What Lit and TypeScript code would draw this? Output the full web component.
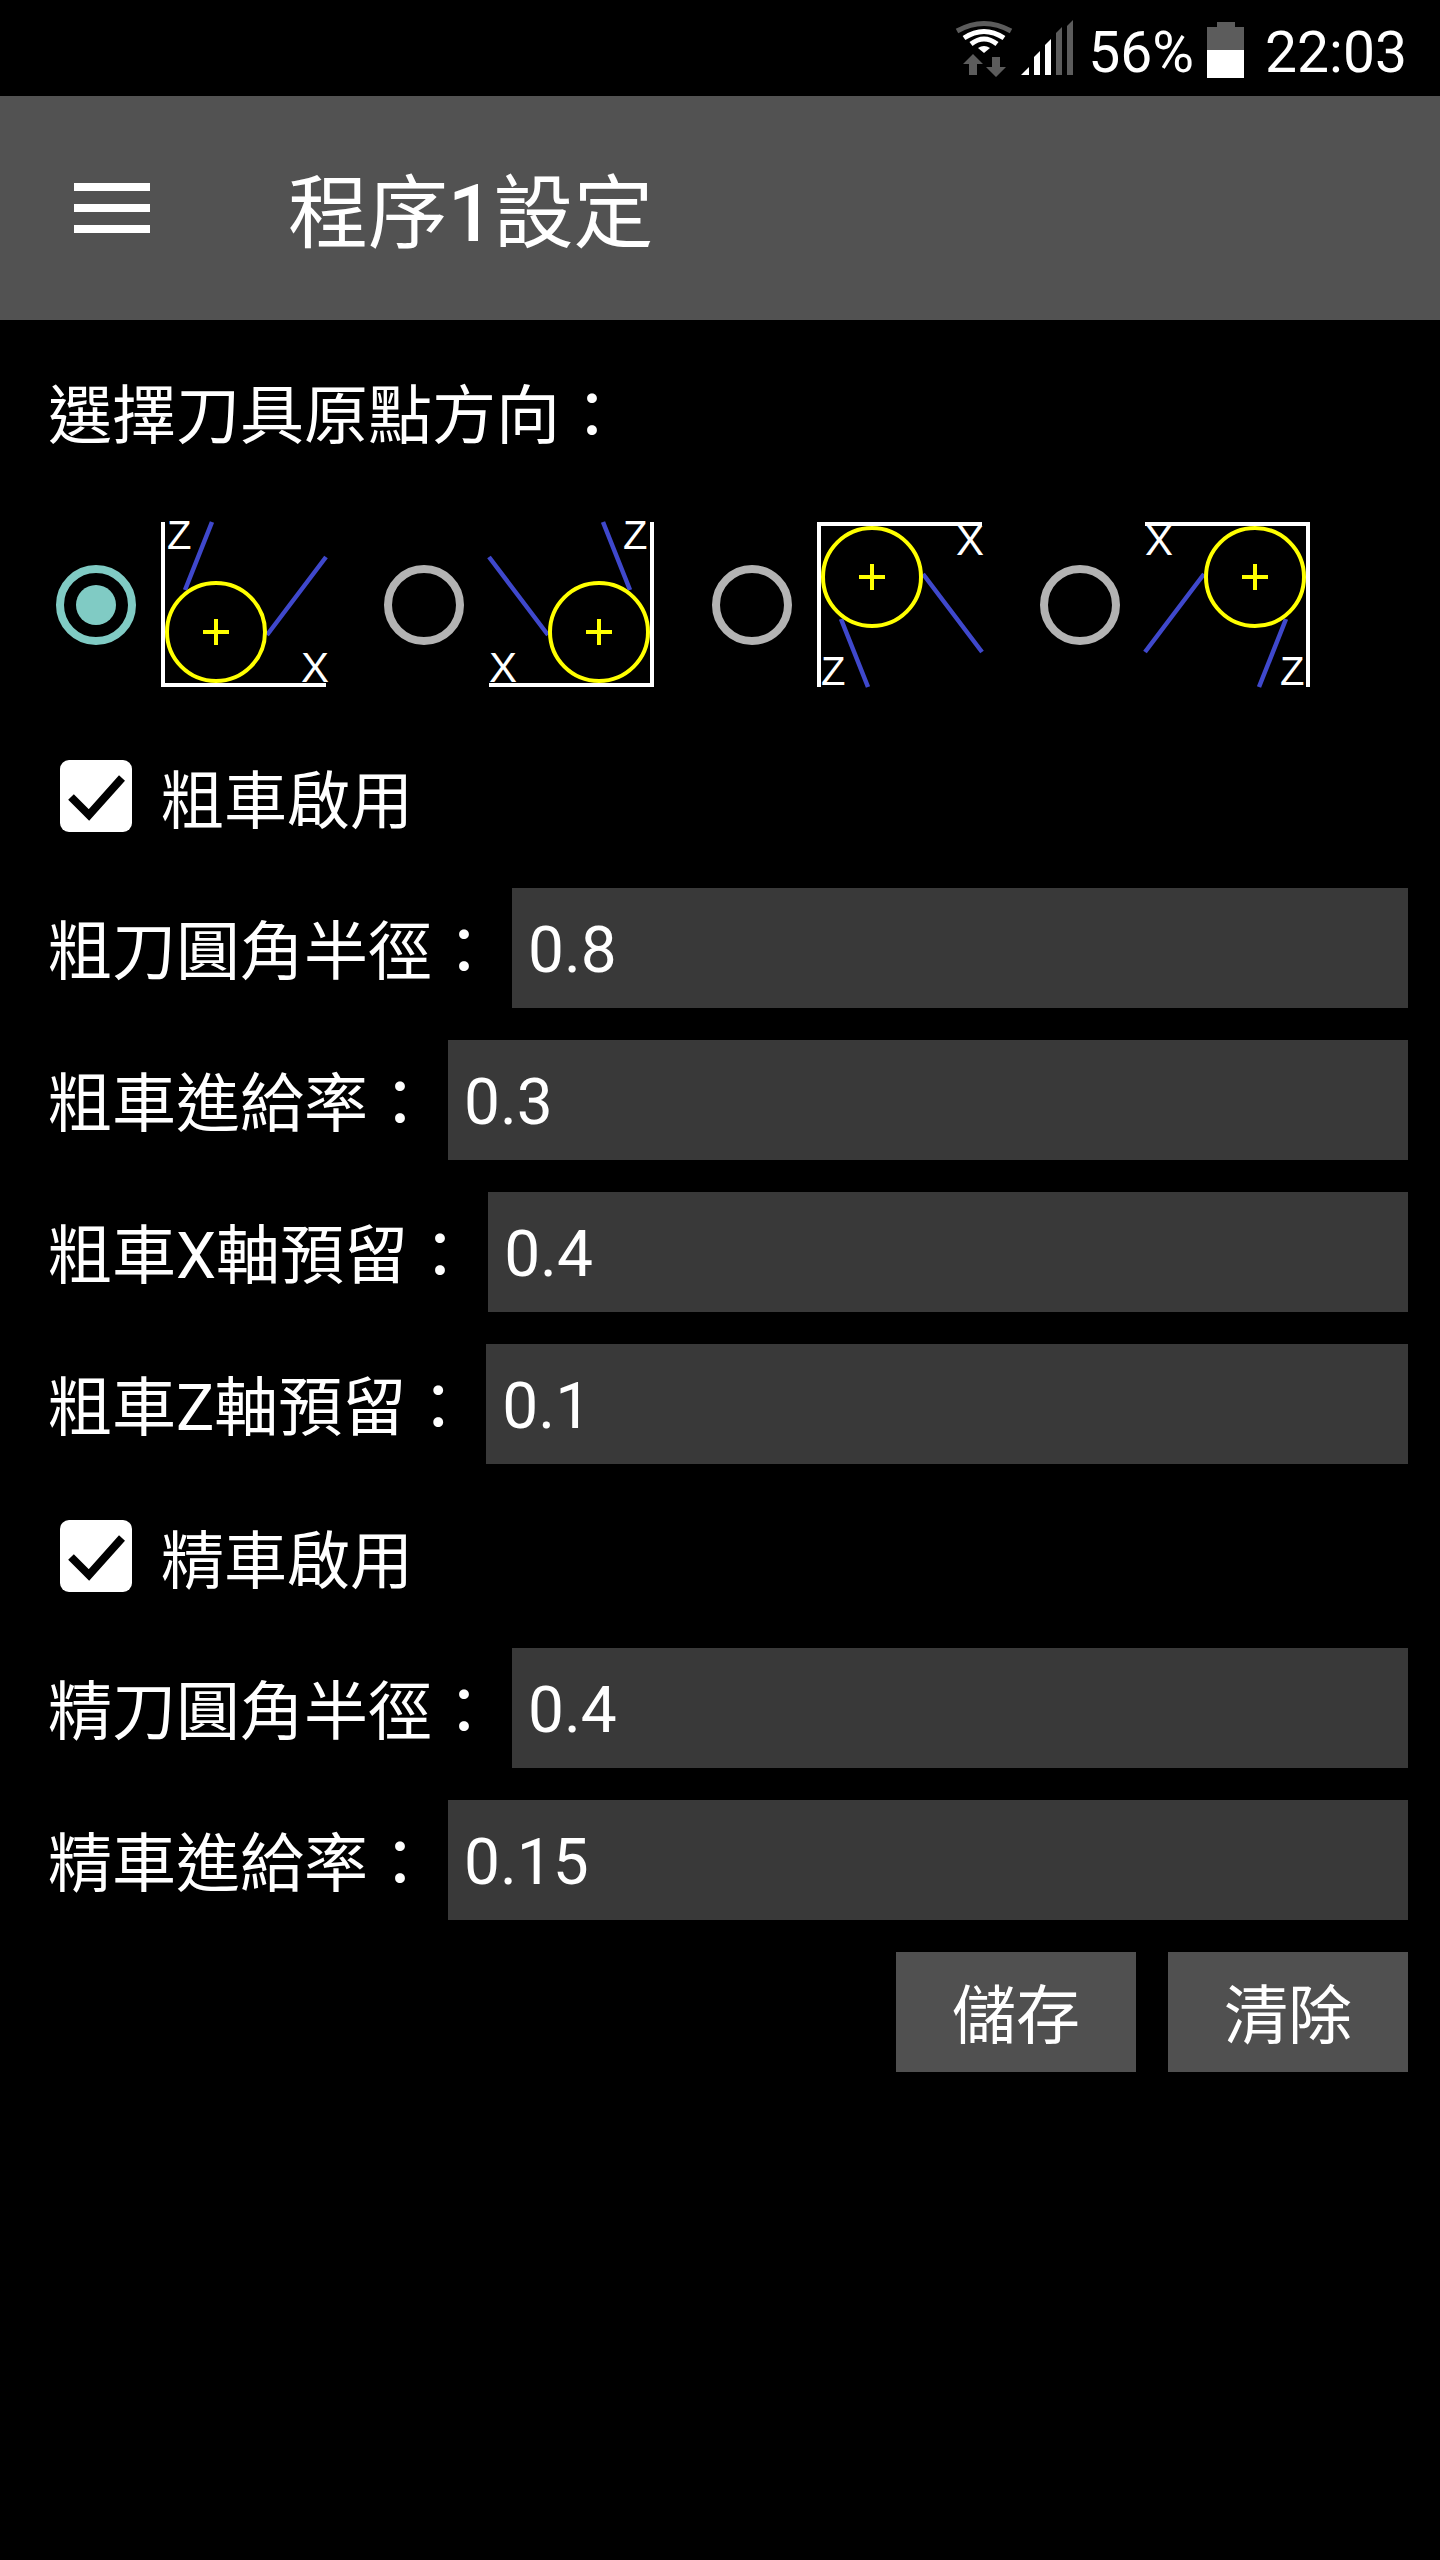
import { LitElement, css, html, svg } from 'lit';
import { customElement } from 'lit/decorators.js';

const origins = [
  { flipX: false, flipY: false, zX: 6, zY: 27, xX: 140, xY: 160, checked: true },
  { flipX: true, flipY: false, zX: 134, zY: 27, xX: 0, xY: 160, checked: false },
  { flipX: false, flipY: true, zX: 4, zY: 163, xX: 139, xY: 33, checked: false },
  { flipX: true, flipY: true, zX: 135, zY: 163, xX: 0, xY: 33, checked: false },
];

const roughFields = [
  { label: '粗刀圓角半徑：', value: '0.8' },
  { label: '粗車進給率：', value: '0.3' },
  { label: '粗車X軸預留：', value: '0.4' },
  { label: '粗車Z軸預留：', value: '0.1' },
];

const fineFields = [
  { label: '精刀圓角半徑：', value: '0.4' },
  { label: '精車進給率：', value: '0.15' },
];

@customElement('app-root')
export class AppRoot extends LitElement {
  static styles = css`
    :host {
      display: block;
      min-height: 2560px;
      background: #000;
      color: #fff;
      font-family: Roboto, 'Noto Sans CJK TC', sans-serif;
    }

    .status {
      display: flex;
      align-items: center;
      justify-content: flex-end;
      height: 96px;
      padding-right: 33px;
      font-size: 57px;
    }

    .status svg {
      display: block;
    }

    .status span {
      line-height: 96px;
      padding-top: 10px;
    }

    .wifi {
      margin-right: 7px;
    }

    .signal {
      margin-right: 15px;
    }

    .battery {
      margin: 4px 21px 0 13px;
    }

    .appbar {
      display: flex;
      align-items: center;
      height: 224px;
      padding-left: 74px;
      background: #525252;
    }

    .menu {
      display: block;
      margin-right: 138px;
    }

    .title {
      font-size: 80px;
      margin-top: -4px;
    }

    .title b {
      font-weight: 500;
    }

    main {
      padding: 46px 32px 0 48px;
      font-size: 64px;
    }

    .heading {
      line-height: 96px;
      padding-top: 3px;
      margin-bottom: -3px;
    }

    .origins {
      display: flex;
      margin: 60px 0 0 8px;
    }

    .origin {
      display: flex;
      align-items: center;
      gap: 25px;
      margin-right: 58px;
    }

    .origin svg {
      display: block;
      overflow: visible;
    }

    .radio {
      box-sizing: border-box;
      display: flex;
      align-items: center;
      justify-content: center;
      width: 80px;
      height: 80px;
      border: 8px solid #b3b3b3;
      border-radius: 50%;
    }

    .radio.on {
      border-color: #80cbc4;
    }

    .radio.on::after {
      content: '';
      width: 40px;
      height: 40px;
      border-radius: 50%;
      background: #80cbc4;
    }

    .check {
      display: flex;
      align-items: center;
      gap: 29px;
      height: 72px;
      margin: 56px 0 56px 12px;
      font-size: 63px;
    }

    .origins + .check {
      margin-top: 73px;
    }

    .check span {
      margin-top: -2px;
    }

    .box {
      display: block;
      flex: none;
    }

    .field {
      display: flex;
      align-items: center;
      height: 120px;
      margin-bottom: 32px;
    }

    .field label {
      flex: none;
      margin: -5px 16px 0 0;
    }

    input {
      flex: 1;
      box-sizing: border-box;
      min-width: 0;
      height: 120px;
      padding: 4px 16px 0;
      border: 0;
      border-radius: 0;
      background: #393939;
      color: #fff;
      font: inherit;
    }

    .buttons {
      display: flex;
      justify-content: flex-end;
      gap: 32px;
    }

    button {
      width: 240px;
      height: 120px;
      padding: 0 0 4px;
      border: 0;
      background: #505050;
      color: #fff;
      font: inherit;
    }
  `;

  private wifi() {
    return html`<svg class="wifi" width="60" height="58" viewBox="0 0 60 58">
      <path d="M3 12Q30 -3 57 12" fill="none" stroke="#5c5c5c" stroke-width="5" />
      <path d="M10 19Q30 6 50 19" fill="none" stroke="#fff" stroke-width="5" />
      <path d="M17 25Q30 15 43 25" fill="none" stroke="#fff" stroke-width="5" />
      <path d="M24 29Q30 25 36 29L30 34Z" fill="#fff" />
      <path d="M19 35L29 45H23V56H15V45H9Z" fill="#5c5c5c" />
      <path d="M42 58L32 48H38V38H46V48H52Z" fill="#5c5c5c" />
    </svg>`;
  }

  private signal() {
    return html`<svg class="signal" width="52" height="56" viewBox="0 0 52 56">
      <path d="M0 55L8 47V55Z" fill="#fff" />
      <path d="M13 37L19 31V55H13Z" fill="#fff" />
      <path d="M24 25L30 19V55H24Z" fill="#fff" />
      <path d="M35 13L41 7V55H35Z" fill="#5c5c5c" />
      <path d="M46 6L52 0V55H46Z" fill="#5c5c5c" />
    </svg>`;
  }

  private battery() {
    return html`<svg class="battery" width="37" height="56" viewBox="0 0 37 56">
      <path d="M10 0H28V5H37V28H0V5H10Z" fill="#5c5c5c" />
      <rect y="28" width="37" height="28" fill="#fff" />
    </svg>`;
  }

  // same drawing four times, only the text stays unmirrored
  private diagram(o: (typeof origins)[number]) {
    const sx = o.flipX ? -1 : 1;
    const sy = o.flipY ? -1 : 1;
    const flip = `translate(${o.flipX ? 165 : 0} ${o.flipY ? 165 : 0}) scale(${sx} ${sy})`;
    return html`<svg width="165" height="165" viewBox="0 0 165 165">
      ${svg`
        <g transform=${flip}>
          <path d="M2 0V163H165" fill="none" stroke="#fff" stroke-width="4" />
          <path d="M51 0L24 68M165 35L106 113" fill="none" stroke="#3f48cc" stroke-width="4.5" />
          <circle cx="55" cy="110" r="49" fill="none" stroke="#ff0" stroke-width="4" />
          <path d="M42 110H68M55 97V123" fill="none" stroke="#ff0" stroke-width="4" />
        </g>
        <text x=${o.zX} y=${o.zY} font-family="Liberation Sans" font-size="40" fill="#fff">Z</text>
        <text x=${o.xX} y=${o.xY} font-family="Liberation Sans" font-size="42" fill="#fff">X</text>
      `}
    </svg>`;
  }

  private checkRow(label: string) {
    return html`<div class="check">
      <svg class="box" width="72" height="72" viewBox="0 0 72 72">
        <rect width="72" height="72" rx="9" fill="#fff" />
        <path d="M11 37L29 55L62 18" fill="none" stroke="#000" stroke-width="8" />
      </svg>
      <span>${label}</span>
    </div>`;
  }

  private field(f: { label: string; value: string }) {
    return html`<div class="field">
      <label>${f.label}</label>
      <input .value=${f.value} />
    </div>`;
  }

  render() {
    return html`
      <div class="status">
        ${this.wifi()} ${this.signal()}
        <span>56%</span>
        ${this.battery()}
        <span>22:03</span>
      </div>
      <header class="appbar">
        <svg class="menu" width="76" height="50" viewBox="0 0 76 50">
          <path d="M0 0H76V8H0ZM0 21H76V29H0ZM0 42H76V50H0Z" fill="#fff" />
        </svg>
        <div class="title">程序<b>1</b>設定</div>
      </header>
      <main>
        <div class="heading">選擇刀具原點方向：</div>
        <div class="origins">
          ${origins.map(
            (o) => html`<div class="origin">
              <div class="radio ${o.checked ? 'on' : ''}"></div>
              ${this.diagram(o)}
            </div>`,
          )}
        </div>
        ${this.checkRow('粗車啟用')} ${roughFields.map((f) => this.field(f))}
        ${this.checkRow('精車啟用')} ${fineFields.map((f) => this.field(f))}
        <div class="buttons">
          <button>儲存</button>
          <button>清除</button>
        </div>
      </main>
    `;
  }
}
